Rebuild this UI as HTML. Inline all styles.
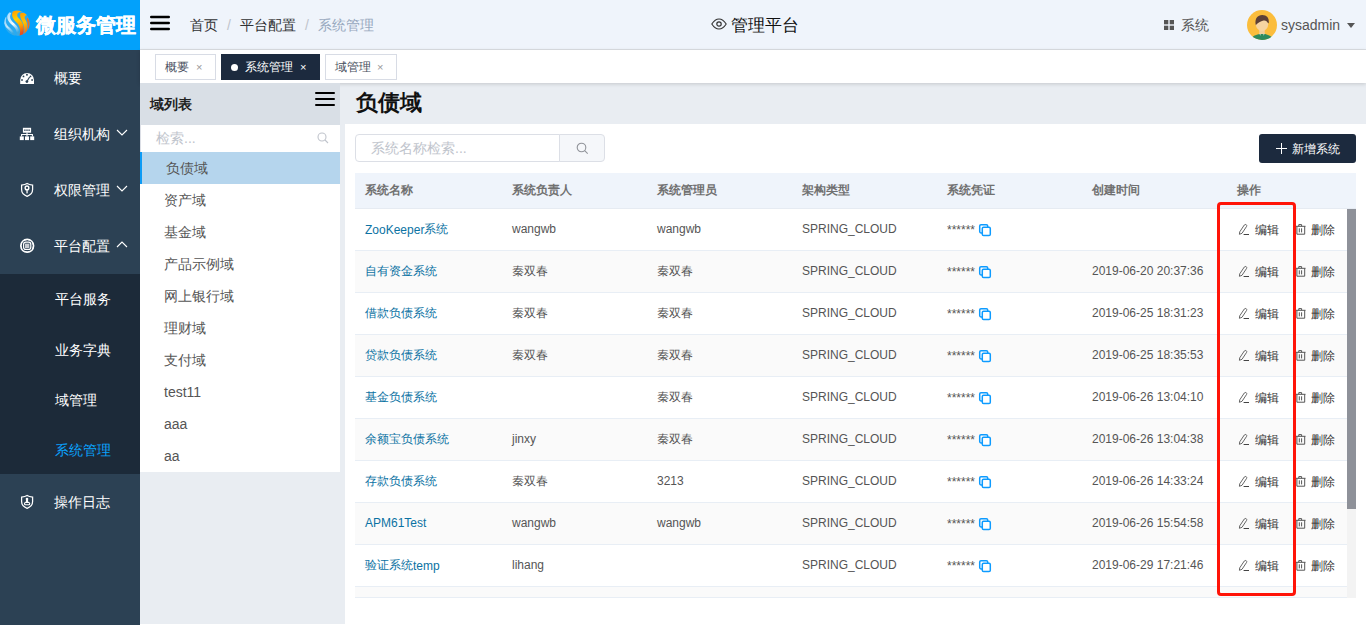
<!DOCTYPE html>
<html><head><meta charset="utf-8">
<style>
*{margin:0;padding:0;box-sizing:border-box}
html,body{width:1366px;height:625px;overflow:hidden;background:#e9edf2;font-family:"Liberation Sans",sans-serif;font-size:13px;color:#333}
.abs{position:absolute}
#side{left:0;top:0;width:140px;height:625px;background:#2c4154}
#logo{left:0;top:0;width:140px;height:50px;background:#02a1fb}
#logo .t{left:36px;top:12px;font-size:20px;font-weight:900;-webkit-text-stroke:0.3px #fff;color:#fff;letter-spacing:0px;white-space:nowrap}
.mi{left:0;width:140px;height:56px;color:#fff;font-size:14px;font-weight:500}
.mi .ic{left:19px;top:21px;width:15px;height:15px}
.mi .tx{left:54px;top:20px;white-space:nowrap}
.mi .ar{left:116px;top:23px}
#sub{left:0;top:274px;width:140px;height:200px;background:#1c2a39}
.si{left:55px;color:#fff;font-size:14px;font-weight:500;white-space:nowrap}
#hdr{left:140px;top:0;width:1226px;height:50px;background:#eff4fb;border-bottom:1px solid #dcdfe4}
#tabs{left:140px;top:50px;width:1226px;height:33px;background:#fff;box-shadow:0 1px 4px rgba(0,0,0,.16)}
.tab{top:4px;height:26px;border:1px solid #d8dce5;background:#fff;font-size:12px;color:#495060;white-space:nowrap}
.tab .x{font-size:11px;color:#999}
#dp{left:140px;top:83px;width:200px;height:389px;background:#fff}
#dph{left:140px;top:83px;width:200px;height:42px;background:#d9dfe6}
.di{left:140px;width:200px;height:32px;font-size:14px;color:#555;white-space:nowrap}
.di span{position:absolute;left:24px;top:8px}
#card{left:345px;top:124px;width:1021px;height:501px;background:#fff}
.th{top:172px;height:36px;background:#eff4fb}
.th2{font-size:12px;font-weight:bold;color:#707070;white-space:nowrap}
.td{font-size:12px;color:#555;white-space:nowrap}
.nm{color:#0b72a3}
.cj{position:relative;top:-1px}
</style></head><body>
<!-- sidebar -->
<div id="side" class="abs"></div>
<div id="logo" class="abs">
  <svg class="abs" style="left:0;top:5px" width="35" height="35" viewBox="0 0 35 35">
    <defs>
      <linearGradient id="og" x1="0" y1="0" x2="0.2" y2="1"><stop offset="0" stop-color="#ff9800"/><stop offset=".4" stop-color="#ffd000"/><stop offset=".7" stop-color="#ffa000"/><stop offset="1" stop-color="#e8501e"/></linearGradient>
      <linearGradient id="og2" x1="0" y1="0" x2="0.2" y2="1"><stop offset="0" stop-color="#ff9a00"/><stop offset=".5" stop-color="#ffc400"/><stop offset="1" stop-color="#ee6a20"/></linearGradient>
      <linearGradient id="wg" x1="0" y1="0" x2="0.3" y2="1"><stop offset="0" stop-color="#a8dcff"/><stop offset=".55" stop-color="#f4fbff"/><stop offset="1" stop-color="#3aa8e0"/></linearGradient>
      <clipPath id="sp"><circle cx="17" cy="18" r="12.8"/></clipPath>
    </defs>
    <g clip-path="url(#sp)">
      <circle cx="17" cy="18" r="13" fill="#2aaaf0"/>
      <path d="M5.5 12C3.5 17 6 21.5 10 24.5C13 27 14 29.5 13.5 32" stroke="url(#wg)" stroke-width="2.2" fill="none" opacity=".75"/>
      <path d="M10 7.5C7.5 11.5 9 16 13.5 19.5C17 22.5 19 26 18.5 32" stroke="url(#wg)" stroke-width="2.8" fill="none"/>
      <path d="M13 6.5C15 5 19 5 21.5 6.5C17 7.5 16 10 18.5 13C22 16.5 25.5 20 23 31L19.5 31C21.5 22 18 19 15.5 16.5C12.5 13.5 11 9.5 13 6.5Z" fill="url(#og)"/>
      <path d="M20.5 8C23 7.5 25.5 8.5 27 10C24.5 10.5 24 12.5 25.5 15C27.5 18.5 28.5 23 25.5 31.5L23.5 31.5C25.5 24 24 19.5 22 16C20.5 13 19.5 10 20.5 8Z" fill="url(#og2)"/>
      <path d="M27.5 12.5C29.5 15 30.5 19 29.5 23C29 25 28 27 27 28C28.5 22 28 17 26.5 14Z" fill="#f07020"/>
    </g>
  </svg>
  <div class="abs t">微服务管理</div>
</div>

<div class="abs mi" style="top:50px">
  <div class="abs tx">概要</div>
</div>
<svg class="abs" style="left:14px;top:62px" width="30" height="30" viewBox="0 0 30 30"><path d="M6.2 22V18A6.9 7.1 0 0 1 20 18V22Z" fill="#fff"/><g fill="#2c4154"><rect x="12.1" y="11.9" width="1.7" height="1.7"/><circle cx="9.5" cy="14.4" r=".9"/><circle cx="16.5" cy="14.4" r=".9"/><rect x="7.2" y="17.2" width="1.6" height="1.6"/><rect x="17.3" y="17.2" width="1.6" height="1.6"/><circle cx="12.9" cy="19.6" r="1.4"/></g><path d="M12.9 19.6L15.6 14.9" stroke="#2c4154" stroke-width="1.1"/></svg>
<div class="abs mi" style="top:106px">
  <div class="abs tx">组织机构</div>
  <svg class="abs ar" width="12" height="7" viewBox="0 0 12 7"><path d="M1 1l5 5 5-5" stroke="#fff" stroke-width="1.1" fill="none"/></svg>
</div>
<svg class="abs" style="left:14px;top:118px" width="30" height="30" viewBox="0 0 30 30"><rect x="8.9" y="9.8" width="8.2" height="4.9" fill="#fff"/><g fill="#2c4154"><rect x="10.3" y="11.4" width="1.2" height="1.6"/><rect x="12.4" y="11.4" width="1.2" height="1.6"/><rect x="14.5" y="11.4" width="1.2" height="1.6"/></g><path d="M13 14.6V16.5M7.6 18.6V16.5H18.4V18.6M13 16.5V18.6" stroke="#fff" stroke-width="1.1" fill="none"/><rect x="5.8" y="18.4" width="4" height="3.7" fill="#fff"/><rect x="11" y="18.4" width="4" height="3.7" fill="#fff"/><rect x="16.2" y="18.4" width="4" height="3.7" fill="#fff"/></svg>
<div class="abs mi" style="top:162px">
  <div class="abs tx">权限管理</div>
  <svg class="abs ar" width="12" height="7" viewBox="0 0 12 7"><path d="M1 1l5 5 5-5" stroke="#fff" stroke-width="1.1" fill="none"/></svg>
</div>
<svg class="abs" style="left:14px;top:174px" width="30" height="30" viewBox="0 0 30 30"><path d="M13.1 9.6C11.6 10.6 9.6 11 7.6 11.1V15.6C7.6 18.9 9.9 21.2 13.1 22.3C16.3 21.2 18.6 18.9 18.6 15.6V11.1C16.6 11 14.6 10.6 13.1 9.6Z" stroke="#fff" stroke-width="1.25" fill="none"/><circle cx="13" cy="13.9" r="1.85" stroke="#fff" stroke-width="1.4" fill="none"/><rect x="12.4" y="15.5" width="1.3" height="3.9" fill="#fff"/></svg>
<div class="abs mi" style="top:218px">
  <div class="abs tx">平台配置</div>
  <svg class="abs ar" width="12" height="7" viewBox="0 0 12 7"><path d="M1 6l5-5 5 5" stroke="#fff" stroke-width="1.1" fill="none"/></svg>
</div>
<svg class="abs" style="left:14px;top:230px" width="30" height="30" viewBox="0 0 30 30"><circle cx="13.2" cy="15.8" r="6.5" stroke="#fff" stroke-width="1.4" fill="none"/><rect x="9.6" y="12.2" width="7.2" height="7.2" rx="2.2" stroke="#fff" stroke-width="1.2" fill="none"/><rect x="11" y="13.6" width="4.4" height="4.4" fill="#c8ccd2"/><path d="M9.6 10.5Q13.2 8.8 16.8 10.5M9.6 21.1Q13.2 22.8 16.8 21.1M7.9 12.2Q6.4 15.8 7.9 19.4M18.5 12.2Q20 15.8 18.5 19.4" stroke="#fff" stroke-width="1" fill="none"/></svg>
<div id="sub" class="abs"></div>
<div class="abs si" style="top:291px">平台服务</div>
<div class="abs si" style="top:342px">业务字典</div>
<div class="abs si" style="top:392px">域管理</div>
<div class="abs si" style="top:442px;color:#0aa3ff">系统管理</div>
<div class="abs mi" style="top:474px">
  <div class="abs tx">操作日志</div>
</div>
<svg class="abs" style="left:14px;top:487px" width="30" height="30" viewBox="0 0 30 30"><path d="M13.1 8.6C11.6 9.6 9.6 10 7.6 10.1V14.6C7.6 17.9 9.9 20.2 13.1 21.3C16.3 20.2 18.6 17.9 18.6 14.6V10.1C16.6 10 14.6 9.6 13.1 8.6Z" stroke="#fff" stroke-width="1.25" fill="none"/><circle cx="13" cy="12" r="1.3" fill="#fff"/><path d="M12.1 12.8h1.8l.5 2.4h-2.8z" fill="#fff"/><rect x="10.5" y="15.5" width="5.2" height="2.3" rx="1" stroke="#fff" stroke-width="1.1" fill="none"/></svg>

<!-- header -->
<div id="hdr" class="abs">
  <svg class="abs" style="left:10px;top:15px" width="20" height="16" viewBox="0 0 20 16"><rect y="0.7" width="20" height="2.6" rx="1.2" fill="#000"/><rect y="6.7" width="20" height="2.6" rx="1.2" fill="#000"/><rect y="12.7" width="20" height="2.6" rx="1.2" fill="#000"/></svg>
  <div class="abs" style="left:50px;top:17px;font-size:14px;color:#303133;white-space:nowrap">首页<span style="color:#c0c4cc;margin:0 9px">/</span>平台配置<span style="color:#c0c4cc;margin:0 9px">/</span><span style="color:#97a8be">系统管理</span></div>
  <svg class="abs" style="left:571px;top:18px" width="16" height="12" viewBox="0 0 16 12"><path d="M0.8 6C3 2.6 5.3 1 8 1s5 1.6 7.2 5C13 9.4 10.7 11 8 11S3 9.4 0.8 6z" stroke="#333" stroke-width="1.1" fill="none"/><circle cx="8" cy="6" r="2.2" stroke="#333" stroke-width="1.2" fill="none"/></svg>
  <div class="abs" style="left:591px;top:15px;font-size:16.5px;color:#111;white-space:nowrap">管理平台</div>
  <svg class="abs" style="left:1024px;top:20px" width="10" height="10" viewBox="0 0 10 10"><rect width="4.3" height="4.3" fill="#555"/><rect x="5.7" width="4.3" height="4.3" fill="#555"/><rect y="5.7" width="4.3" height="4.3" fill="#555"/><rect x="5.7" y="5.7" width="4.3" height="4.3" fill="#555"/></svg>
  <div class="abs" style="left:1041px;top:17px;font-size:14px;color:#555;white-space:nowrap">系统</div>
  <svg class="abs" style="left:1107px;top:10px" width="30" height="30" viewBox="0 0 30 30">
    <clipPath id="cc"><circle cx="15" cy="15" r="15"/></clipPath>
    <circle cx="15" cy="15" r="15" fill="#fbbd3c"/>
    <g clip-path="url(#cc)">
      <path d="M3 31Q4 25 15 23.5Q26 25 27 31Z" fill="#2e8a5d"/>
      <rect x="12.3" y="17" width="5.4" height="7" fill="#f2cf9c"/>
      <ellipse cx="15" cy="14.3" rx="6.2" ry="6.6" fill="#f6d4a2"/>
      <path d="M8.6 14.5C7.8 8.5 10.5 5 15.2 5C19.8 5 22.3 7.8 21.8 13L21 13.3C20 11 18.5 10.2 16.5 10.6C13.5 11.3 10.8 12.8 8.9 15Z" fill="#5d4037"/>
      <path d="M12.3 23.8L14 25.2M17.7 23.8L16 25.2" stroke="#cfe5d9" stroke-width=".8"/>
    </g>
  </svg>
  <div class="abs" style="left:1141px;top:17px;font-size:14px;color:#555;white-space:nowrap">sysadmin</div>
  <svg class="abs" style="left:1207px;top:23px" width="8" height="5" viewBox="0 0 8 5"><path d="M0 0h8L4 5z" fill="#555"/></svg>
</div>

<!-- tabs -->
<div id="tabs" class="abs">
  <div class="abs tab" style="left:15px;width:61px"><span class="abs" style="left:9px;top:4px">概要</span><span class="abs x" style="left:40px;top:6px">×</span></div>
  <div class="abs tab" style="left:81px;width:99px;background:#1c2a3e;border-color:#1c2a3e;color:#fff"><span class="abs" style="left:9px;top:9px;width:7px;height:7px;border-radius:50%;background:#fff"></span><span class="abs" style="left:23px;top:4px">系统管理</span><span class="abs x" style="left:78px;top:6px;color:#fff">×</span></div>
  <div class="abs tab" style="left:185px;width:72px"><span class="abs" style="left:9px;top:4px">域管理</span><span class="abs x" style="left:51px;top:6px">×</span></div>
</div>

<!-- domain panel -->
<div id="dp" class="abs"></div>
<div id="dph" class="abs">
  <div class="abs" style="left:10px;top:13px;font-size:14px;font-weight:bold;color:#222">域列表</div>
  <svg class="abs" style="left:175px;top:8px" width="20" height="16" viewBox="0 0 20 16"><rect y="0.9" width="20" height="2.1" rx="1" fill="#000"/><rect y="6.9" width="20" height="2.1" rx="1" fill="#000"/><rect y="12.9" width="20" height="2.1" rx="1" fill="#000"/></svg>
</div>
<div class="abs" style="left:140px;top:125px;width:1px;height:27px;background:#dcdfe6"></div>
<div class="abs" style="left:156px;top:130px;font-size:14px;color:#c0c4cc">检索...</div>
<svg class="abs" style="left:317px;top:132px" width="12" height="12" viewBox="0 0 12 12"><circle cx="5" cy="5" r="4" stroke="#c0c4cc" stroke-width="1.1" fill="none"/><path d="M8 8l3 3" stroke="#c0c4cc" stroke-width="1.1"/></svg>
<div class="abs di" style="top:152px;background:#b5d5ed;border-left:2px solid #0d9bf5"><span style="left:24px">负债域</span></div>
<div class="abs di" style="top:184px"><span>资产域</span></div>
<div class="abs di" style="top:216px"><span>基金域</span></div>
<div class="abs di" style="top:248px"><span>产品示例域</span></div>
<div class="abs di" style="top:280px"><span>网上银行域</span></div>
<div class="abs di" style="top:312px"><span>理财域</span></div>
<div class="abs di" style="top:344px"><span>支付域</span></div>
<div class="abs di" style="top:376px"><span>test11</span></div>
<div class="abs di" style="top:408px"><span>aaa</span></div>
<div class="abs di" style="top:440px"><span>aa</span></div>

<!-- main -->
<div class="abs" style="left:356px;top:88px;font-size:22px;font-weight:bold;color:#111">负债域</div>
<div id="card" class="abs"></div>
<!--TBL-->
<div class="abs" style="left:355px;top:134px;width:205px;height:28px;border:1px solid #dcdfe6;border-radius:4px 0 0 4px;background:#fff"><span class="abs" style="left:15px;top:5px;font-size:14px;color:#c0c4cc;white-space:nowrap">系统名称检索...</span></div>
<div class="abs" style="left:559px;top:134px;width:46px;height:28px;border:1px solid #dcdfe6;border-radius:0 4px 4px 0;background:#f5f7fa"><svg class="abs" style="left:16px;top:7px" width="13" height="13" viewBox="0 0 13 13"><circle cx="5.5" cy="5.5" r="4.3" stroke="#909399" stroke-width="1.1" fill="none"/><path d="M8.7 8.7l3 3" stroke="#909399" stroke-width="1.1"/></svg></div>
<div class="abs" style="left:1259px;top:134px;width:97px;height:29px;border-radius:3px;background:#1c2a3e;color:#fff;font-size:12px;white-space:nowrap"><svg class="abs" style="left:17px;top:9px" width="11" height="11" viewBox="0 0 11 11"><path d="M5.5 0v11M0 5.5h11" stroke="#fff" stroke-width="1"/></svg><span class="abs" style="left:33px;top:7px">新增系统</span></div>
<div class="abs" style="left:355px;top:173px;width:1001px;height:36px;background:#eff4fb;border-bottom:1px solid #e6ebf2"></div>
<div class="abs th2" style="left:365px;top:182px">系统名称</div>
<div class="abs th2" style="left:512px;top:182px">系统负责人</div>
<div class="abs th2" style="left:657px;top:182px">系统管理员</div>
<div class="abs th2" style="left:802px;top:182px">架构类型</div>
<div class="abs th2" style="left:947px;top:182px">系统凭证</div>
<div class="abs th2" style="left:1092px;top:182px">创建时间</div>
<div class="abs th2" style="left:1237px;top:182px">操作</div>
<div class="abs" style="left:355px;top:209px;width:992px;height:42px;background:#fff;border-bottom:1px solid #e8eef5"></div>
<div class="abs td nm" style="left:365px;top:222px">ZooKeeper<span class="cj">系统</span></div>
<div class="abs td" style="left:512px;top:222px">wangwb</div>
<div class="abs td" style="left:657px;top:222px">wangwb</div>
<div class="abs td" style="left:802px;top:222px">SPRING_CLOUD</div>
<div class="abs td" style="left:947px;top:223px;font-size:12px">******</div>
<svg class="abs" style="left:978px;top:223px" width="14" height="14" viewBox="0 0 14 14"><rect x="1.7" y="1.7" width="8" height="8.2" rx="1.3" stroke="#0d9bff" stroke-width="1.5" fill="none"/><rect x="4.3" y="4.2" width="8" height="8.3" rx="1.3" stroke="#0d9bff" stroke-width="1.5" fill="#fff"/></svg>
<svg class="abs" style="left:1234px;top:218px" width="20" height="20" viewBox="0 0 20 20"><path d="M5.4 16.3L5.7 13.9L10.3 7Q11.2 6.1 12.2 6.7Q13.1 7.4 12.6 8.4L8 15.3Z" stroke="#555" stroke-width="0.9" fill="none" stroke-linejoin="round"/><path d="M9.6 16.5H15" stroke="#444" stroke-width="1"/></svg>
<div class="abs td" style="left:1255px;top:222px;color:#333">编辑</div>
<svg class="abs" style="left:1295px;top:218px" width="12" height="20" viewBox="0 0 12 20"><path d="M3.8 8.3V6.6H6.6V8.3M0.8 8.3H10.5M1.9 8.3V16.2H9.7V8.3M4.3 10.3V14.4M6.6 10.3V14.4" stroke="#555" stroke-width="1" fill="none"/></svg>
<div class="abs td" style="left:1311px;top:222px;color:#333">删除</div>
<div class="abs" style="left:355px;top:251px;width:992px;height:42px;background:#fafafa;border-bottom:1px solid #e8eef5"></div>
<div class="abs td nm" style="left:365px;top:264px"><span class="cj">自有资金系统</span></div>
<div class="abs td" style="left:512px;top:264px"><span class="cj">秦双春</span></div>
<div class="abs td" style="left:657px;top:264px"><span class="cj">秦双春</span></div>
<div class="abs td" style="left:802px;top:264px">SPRING_CLOUD</div>
<div class="abs td" style="left:947px;top:265px;font-size:12px">******</div>
<svg class="abs" style="left:978px;top:265px" width="14" height="14" viewBox="0 0 14 14"><rect x="1.7" y="1.7" width="8" height="8.2" rx="1.3" stroke="#0d9bff" stroke-width="1.5" fill="none"/><rect x="4.3" y="4.2" width="8" height="8.3" rx="1.3" stroke="#0d9bff" stroke-width="1.5" fill="#fff"/></svg>
<div class="abs td" style="left:1092px;top:264px">2019-06-20 20:37:36</div>
<svg class="abs" style="left:1234px;top:260px" width="20" height="20" viewBox="0 0 20 20"><path d="M5.4 16.3L5.7 13.9L10.3 7Q11.2 6.1 12.2 6.7Q13.1 7.4 12.6 8.4L8 15.3Z" stroke="#555" stroke-width="0.9" fill="none" stroke-linejoin="round"/><path d="M9.6 16.5H15" stroke="#444" stroke-width="1"/></svg>
<div class="abs td" style="left:1255px;top:264px;color:#333">编辑</div>
<svg class="abs" style="left:1295px;top:260px" width="12" height="20" viewBox="0 0 12 20"><path d="M3.8 8.3V6.6H6.6V8.3M0.8 8.3H10.5M1.9 8.3V16.2H9.7V8.3M4.3 10.3V14.4M6.6 10.3V14.4" stroke="#555" stroke-width="1" fill="none"/></svg>
<div class="abs td" style="left:1311px;top:264px;color:#333">删除</div>
<div class="abs" style="left:355px;top:293px;width:992px;height:42px;background:#fff;border-bottom:1px solid #e8eef5"></div>
<div class="abs td nm" style="left:365px;top:306px"><span class="cj">借款负债系统</span></div>
<div class="abs td" style="left:512px;top:306px"><span class="cj">秦双春</span></div>
<div class="abs td" style="left:657px;top:306px"><span class="cj">秦双春</span></div>
<div class="abs td" style="left:802px;top:306px">SPRING_CLOUD</div>
<div class="abs td" style="left:947px;top:307px;font-size:12px">******</div>
<svg class="abs" style="left:978px;top:307px" width="14" height="14" viewBox="0 0 14 14"><rect x="1.7" y="1.7" width="8" height="8.2" rx="1.3" stroke="#0d9bff" stroke-width="1.5" fill="none"/><rect x="4.3" y="4.2" width="8" height="8.3" rx="1.3" stroke="#0d9bff" stroke-width="1.5" fill="#fff"/></svg>
<div class="abs td" style="left:1092px;top:306px">2019-06-25 18:31:23</div>
<svg class="abs" style="left:1234px;top:302px" width="20" height="20" viewBox="0 0 20 20"><path d="M5.4 16.3L5.7 13.9L10.3 7Q11.2 6.1 12.2 6.7Q13.1 7.4 12.6 8.4L8 15.3Z" stroke="#555" stroke-width="0.9" fill="none" stroke-linejoin="round"/><path d="M9.6 16.5H15" stroke="#444" stroke-width="1"/></svg>
<div class="abs td" style="left:1255px;top:306px;color:#333">编辑</div>
<svg class="abs" style="left:1295px;top:302px" width="12" height="20" viewBox="0 0 12 20"><path d="M3.8 8.3V6.6H6.6V8.3M0.8 8.3H10.5M1.9 8.3V16.2H9.7V8.3M4.3 10.3V14.4M6.6 10.3V14.4" stroke="#555" stroke-width="1" fill="none"/></svg>
<div class="abs td" style="left:1311px;top:306px;color:#333">删除</div>
<div class="abs" style="left:355px;top:335px;width:992px;height:42px;background:#fafafa;border-bottom:1px solid #e8eef5"></div>
<div class="abs td nm" style="left:365px;top:348px"><span class="cj">贷款负债系统</span></div>
<div class="abs td" style="left:512px;top:348px"><span class="cj">秦双春</span></div>
<div class="abs td" style="left:657px;top:348px"><span class="cj">秦双春</span></div>
<div class="abs td" style="left:802px;top:348px">SPRING_CLOUD</div>
<div class="abs td" style="left:947px;top:349px;font-size:12px">******</div>
<svg class="abs" style="left:978px;top:349px" width="14" height="14" viewBox="0 0 14 14"><rect x="1.7" y="1.7" width="8" height="8.2" rx="1.3" stroke="#0d9bff" stroke-width="1.5" fill="none"/><rect x="4.3" y="4.2" width="8" height="8.3" rx="1.3" stroke="#0d9bff" stroke-width="1.5" fill="#fff"/></svg>
<div class="abs td" style="left:1092px;top:348px">2019-06-25 18:35:53</div>
<svg class="abs" style="left:1234px;top:344px" width="20" height="20" viewBox="0 0 20 20"><path d="M5.4 16.3L5.7 13.9L10.3 7Q11.2 6.1 12.2 6.7Q13.1 7.4 12.6 8.4L8 15.3Z" stroke="#555" stroke-width="0.9" fill="none" stroke-linejoin="round"/><path d="M9.6 16.5H15" stroke="#444" stroke-width="1"/></svg>
<div class="abs td" style="left:1255px;top:348px;color:#333">编辑</div>
<svg class="abs" style="left:1295px;top:344px" width="12" height="20" viewBox="0 0 12 20"><path d="M3.8 8.3V6.6H6.6V8.3M0.8 8.3H10.5M1.9 8.3V16.2H9.7V8.3M4.3 10.3V14.4M6.6 10.3V14.4" stroke="#555" stroke-width="1" fill="none"/></svg>
<div class="abs td" style="left:1311px;top:348px;color:#333">删除</div>
<div class="abs" style="left:355px;top:377px;width:992px;height:42px;background:#fff;border-bottom:1px solid #e8eef5"></div>
<div class="abs td nm" style="left:365px;top:390px"><span class="cj">基金负债系统</span></div>
<div class="abs td" style="left:657px;top:390px"><span class="cj">秦双春</span></div>
<div class="abs td" style="left:802px;top:390px">SPRING_CLOUD</div>
<div class="abs td" style="left:947px;top:391px;font-size:12px">******</div>
<svg class="abs" style="left:978px;top:391px" width="14" height="14" viewBox="0 0 14 14"><rect x="1.7" y="1.7" width="8" height="8.2" rx="1.3" stroke="#0d9bff" stroke-width="1.5" fill="none"/><rect x="4.3" y="4.2" width="8" height="8.3" rx="1.3" stroke="#0d9bff" stroke-width="1.5" fill="#fff"/></svg>
<div class="abs td" style="left:1092px;top:390px">2019-06-26 13:04:10</div>
<svg class="abs" style="left:1234px;top:386px" width="20" height="20" viewBox="0 0 20 20"><path d="M5.4 16.3L5.7 13.9L10.3 7Q11.2 6.1 12.2 6.7Q13.1 7.4 12.6 8.4L8 15.3Z" stroke="#555" stroke-width="0.9" fill="none" stroke-linejoin="round"/><path d="M9.6 16.5H15" stroke="#444" stroke-width="1"/></svg>
<div class="abs td" style="left:1255px;top:390px;color:#333">编辑</div>
<svg class="abs" style="left:1295px;top:386px" width="12" height="20" viewBox="0 0 12 20"><path d="M3.8 8.3V6.6H6.6V8.3M0.8 8.3H10.5M1.9 8.3V16.2H9.7V8.3M4.3 10.3V14.4M6.6 10.3V14.4" stroke="#555" stroke-width="1" fill="none"/></svg>
<div class="abs td" style="left:1311px;top:390px;color:#333">删除</div>
<div class="abs" style="left:355px;top:419px;width:992px;height:42px;background:#fafafa;border-bottom:1px solid #e8eef5"></div>
<div class="abs td nm" style="left:365px;top:432px"><span class="cj">余额宝负债系统</span></div>
<div class="abs td" style="left:512px;top:432px">jinxy</div>
<div class="abs td" style="left:657px;top:432px"><span class="cj">秦双春</span></div>
<div class="abs td" style="left:802px;top:432px">SPRING_CLOUD</div>
<div class="abs td" style="left:947px;top:433px;font-size:12px">******</div>
<svg class="abs" style="left:978px;top:433px" width="14" height="14" viewBox="0 0 14 14"><rect x="1.7" y="1.7" width="8" height="8.2" rx="1.3" stroke="#0d9bff" stroke-width="1.5" fill="none"/><rect x="4.3" y="4.2" width="8" height="8.3" rx="1.3" stroke="#0d9bff" stroke-width="1.5" fill="#fff"/></svg>
<div class="abs td" style="left:1092px;top:432px">2019-06-26 13:04:38</div>
<svg class="abs" style="left:1234px;top:428px" width="20" height="20" viewBox="0 0 20 20"><path d="M5.4 16.3L5.7 13.9L10.3 7Q11.2 6.1 12.2 6.7Q13.1 7.4 12.6 8.4L8 15.3Z" stroke="#555" stroke-width="0.9" fill="none" stroke-linejoin="round"/><path d="M9.6 16.5H15" stroke="#444" stroke-width="1"/></svg>
<div class="abs td" style="left:1255px;top:432px;color:#333">编辑</div>
<svg class="abs" style="left:1295px;top:428px" width="12" height="20" viewBox="0 0 12 20"><path d="M3.8 8.3V6.6H6.6V8.3M0.8 8.3H10.5M1.9 8.3V16.2H9.7V8.3M4.3 10.3V14.4M6.6 10.3V14.4" stroke="#555" stroke-width="1" fill="none"/></svg>
<div class="abs td" style="left:1311px;top:432px;color:#333">删除</div>
<div class="abs" style="left:355px;top:461px;width:992px;height:42px;background:#fff;border-bottom:1px solid #e8eef5"></div>
<div class="abs td nm" style="left:365px;top:474px"><span class="cj">存款负债系统</span></div>
<div class="abs td" style="left:512px;top:474px"><span class="cj">秦双春</span></div>
<div class="abs td" style="left:657px;top:474px">3213</div>
<div class="abs td" style="left:802px;top:474px">SPRING_CLOUD</div>
<div class="abs td" style="left:947px;top:475px;font-size:12px">******</div>
<svg class="abs" style="left:978px;top:475px" width="14" height="14" viewBox="0 0 14 14"><rect x="1.7" y="1.7" width="8" height="8.2" rx="1.3" stroke="#0d9bff" stroke-width="1.5" fill="none"/><rect x="4.3" y="4.2" width="8" height="8.3" rx="1.3" stroke="#0d9bff" stroke-width="1.5" fill="#fff"/></svg>
<div class="abs td" style="left:1092px;top:474px">2019-06-26 14:33:24</div>
<svg class="abs" style="left:1234px;top:470px" width="20" height="20" viewBox="0 0 20 20"><path d="M5.4 16.3L5.7 13.9L10.3 7Q11.2 6.1 12.2 6.7Q13.1 7.4 12.6 8.4L8 15.3Z" stroke="#555" stroke-width="0.9" fill="none" stroke-linejoin="round"/><path d="M9.6 16.5H15" stroke="#444" stroke-width="1"/></svg>
<div class="abs td" style="left:1255px;top:474px;color:#333">编辑</div>
<svg class="abs" style="left:1295px;top:470px" width="12" height="20" viewBox="0 0 12 20"><path d="M3.8 8.3V6.6H6.6V8.3M0.8 8.3H10.5M1.9 8.3V16.2H9.7V8.3M4.3 10.3V14.4M6.6 10.3V14.4" stroke="#555" stroke-width="1" fill="none"/></svg>
<div class="abs td" style="left:1311px;top:474px;color:#333">删除</div>
<div class="abs" style="left:355px;top:503px;width:992px;height:42px;background:#fafafa;border-bottom:1px solid #e8eef5"></div>
<div class="abs td nm" style="left:365px;top:516px">APM61Test</div>
<div class="abs td" style="left:512px;top:516px">wangwb</div>
<div class="abs td" style="left:657px;top:516px">wangwb</div>
<div class="abs td" style="left:802px;top:516px">SPRING_CLOUD</div>
<div class="abs td" style="left:947px;top:517px;font-size:12px">******</div>
<svg class="abs" style="left:978px;top:517px" width="14" height="14" viewBox="0 0 14 14"><rect x="1.7" y="1.7" width="8" height="8.2" rx="1.3" stroke="#0d9bff" stroke-width="1.5" fill="none"/><rect x="4.3" y="4.2" width="8" height="8.3" rx="1.3" stroke="#0d9bff" stroke-width="1.5" fill="#fff"/></svg>
<div class="abs td" style="left:1092px;top:516px">2019-06-26 15:54:58</div>
<svg class="abs" style="left:1234px;top:512px" width="20" height="20" viewBox="0 0 20 20"><path d="M5.4 16.3L5.7 13.9L10.3 7Q11.2 6.1 12.2 6.7Q13.1 7.4 12.6 8.4L8 15.3Z" stroke="#555" stroke-width="0.9" fill="none" stroke-linejoin="round"/><path d="M9.6 16.5H15" stroke="#444" stroke-width="1"/></svg>
<div class="abs td" style="left:1255px;top:516px;color:#333">编辑</div>
<svg class="abs" style="left:1295px;top:512px" width="12" height="20" viewBox="0 0 12 20"><path d="M3.8 8.3V6.6H6.6V8.3M0.8 8.3H10.5M1.9 8.3V16.2H9.7V8.3M4.3 10.3V14.4M6.6 10.3V14.4" stroke="#555" stroke-width="1" fill="none"/></svg>
<div class="abs td" style="left:1311px;top:516px;color:#333">删除</div>
<div class="abs" style="left:355px;top:545px;width:992px;height:42px;background:#fff;border-bottom:1px solid #e8eef5"></div>
<div class="abs td nm" style="left:365px;top:558px"><span class="cj">验证系统</span>temp</div>
<div class="abs td" style="left:512px;top:558px">lihang</div>
<div class="abs td" style="left:802px;top:558px">SPRING_CLOUD</div>
<div class="abs td" style="left:947px;top:559px;font-size:12px">******</div>
<svg class="abs" style="left:978px;top:559px" width="14" height="14" viewBox="0 0 14 14"><rect x="1.7" y="1.7" width="8" height="8.2" rx="1.3" stroke="#0d9bff" stroke-width="1.5" fill="none"/><rect x="4.3" y="4.2" width="8" height="8.3" rx="1.3" stroke="#0d9bff" stroke-width="1.5" fill="#fff"/></svg>
<div class="abs td" style="left:1092px;top:558px">2019-06-29 17:21:46</div>
<svg class="abs" style="left:1234px;top:554px" width="20" height="20" viewBox="0 0 20 20"><path d="M5.4 16.3L5.7 13.9L10.3 7Q11.2 6.1 12.2 6.7Q13.1 7.4 12.6 8.4L8 15.3Z" stroke="#555" stroke-width="0.9" fill="none" stroke-linejoin="round"/><path d="M9.6 16.5H15" stroke="#444" stroke-width="1"/></svg>
<div class="abs td" style="left:1255px;top:558px;color:#333">编辑</div>
<svg class="abs" style="left:1295px;top:554px" width="12" height="20" viewBox="0 0 12 20"><path d="M3.8 8.3V6.6H6.6V8.3M0.8 8.3H10.5M1.9 8.3V16.2H9.7V8.3M4.3 10.3V14.4M6.6 10.3V14.4" stroke="#555" stroke-width="1" fill="none"/></svg>
<div class="abs td" style="left:1311px;top:558px;color:#333">删除</div>
<div class="abs" style="left:355px;top:587px;width:992px;height:11px;background:#fafafa;border-bottom:1px solid #e8eef5"></div>
<div class="abs" style="left:1347px;top:209px;width:9px;height:389px;background:#f3f3f3"></div>
<div class="abs" style="left:1347px;top:209px;width:9px;height:300px;background:#8e9199"></div>
<div class="abs" style="left:1217px;top:202px;width:79px;height:394px;border:3px solid #ff1408;border-radius:4px"></div>
<!--/TBL-->
<div class="abs" style="left:140px;top:624px;width:1226px;height:1px;background:#fff"></div>
</body></html>
